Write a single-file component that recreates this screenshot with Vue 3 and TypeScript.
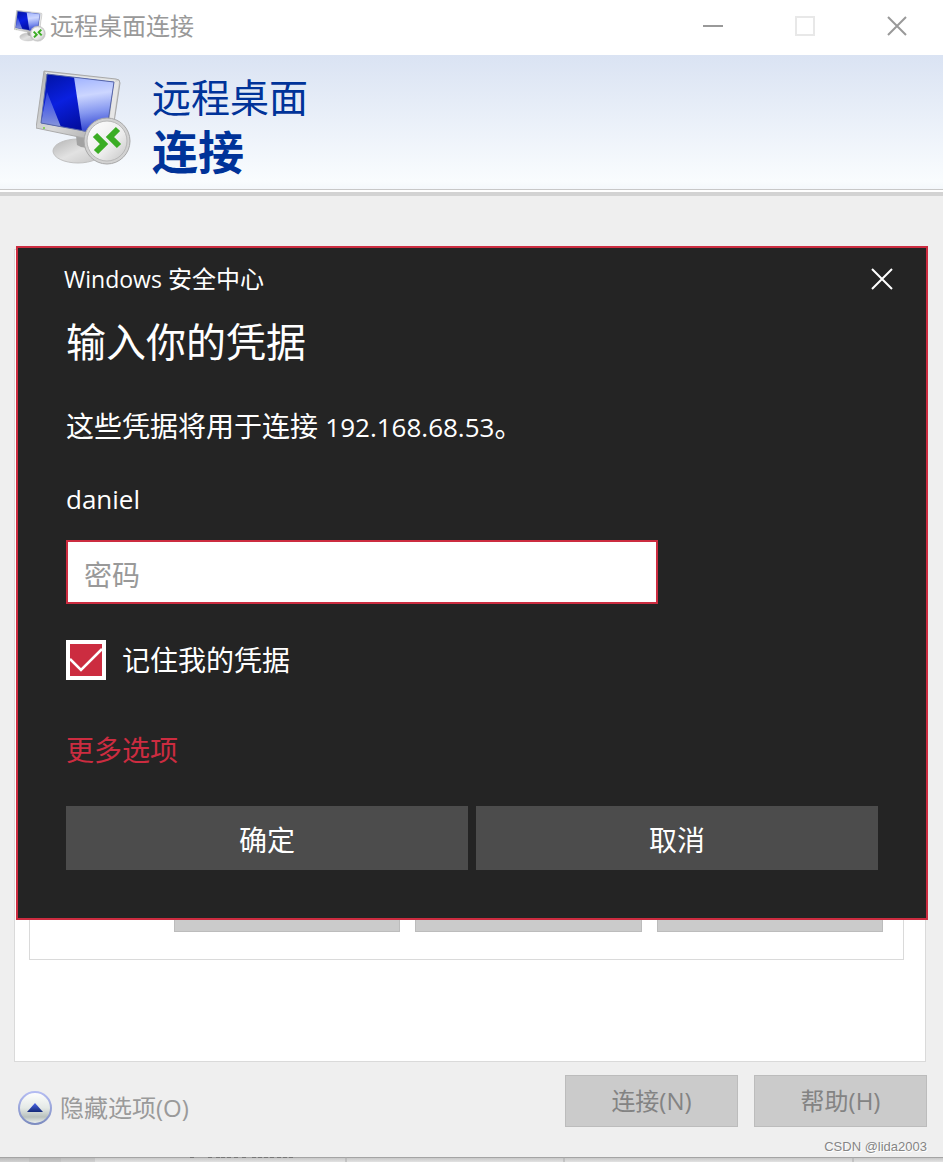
<script setup lang="ts">
import { ref } from 'vue'

const host = '192.168.68.53'
const user = 'daniel'
const password = ref('')
const remember = ref(true)
const sessionActions = ['save', 'save-as', 'open']
const fragments = [190, 208, 216, 221, 227, 234, 242, 252, 258, 264, 270, 277, 283, 289]
</script>

<template>
  <svg class="defs" aria-hidden="true">
    <defs>
      <linearGradient id="screenBlue" x1="0" y1="0" x2="0.6" y2="1">
        <stop offset="0" stop-color="#0012a0" />
        <stop offset="0.45" stop-color="#0a20e0" />
        <stop offset="1" stop-color="#00088c" />
      </linearGradient>
      <linearGradient id="screenShine" x1="0.4" y1="0" x2="0.5" y2="1">
        <stop offset="0" stop-color="#a4b6ff" />
        <stop offset="0.3" stop-color="#ccd6ff" />
        <stop offset="0.6" stop-color="#8698f0" />
        <stop offset="1" stop-color="#1c2fc8" />
      </linearGradient>
      <linearGradient id="screenGlint" x1="0" y1="0" x2="0" y2="1">
        <stop offset="0" stop-color="#5a70f0" stop-opacity="0.5" />
        <stop offset="1" stop-color="#8a98dc" />
      </linearGradient>
      <linearGradient id="bezel" x1="0" y1="0" x2="1" y2="1">
        <stop offset="0" stop-color="#b2b4b4" />
        <stop offset="0.5" stop-color="#d8d8d8" />
        <stop offset="1" stop-color="#9a9a9a" />
      </linearGradient>
      <linearGradient id="stand" x1="0" y1="0" x2="1" y2="1">
        <stop offset="0" stop-color="#b4b4b4" />
        <stop offset="0.5" stop-color="#e2e2e2" />
        <stop offset="1" stop-color="#c4c4c4" />
      </linearGradient>
      <linearGradient id="badge" x1="0" y1="0" x2="1" y2="1">
        <stop offset="0" stop-color="#ffffff" />
        <stop offset="0.6" stop-color="#ececec" />
        <stop offset="1" stop-color="#c4c4c4" />
      </linearGradient>
      <linearGradient id="orb" x1="0" y1="0" x2="0" y2="1">
        <stop offset="0" stop-color="#ffffff" />
        <stop offset="0.5" stop-color="#e4e9e6" />
        <stop offset="0.78" stop-color="#b9c1bd" />
        <stop offset="1" stop-color="#f4f8f6" />
      </linearGradient>
      <linearGradient id="orbRing" x1="0" y1="0" x2="0" y2="1">
        <stop offset="0" stop-color="#b4bcf2" />
        <stop offset="1" stop-color="#7d8cc0" />
      </linearGradient>
      <linearGradient id="orbArrow" x1="0" y1="0" x2="0" y2="1">
        <stop offset="0" stop-color="#4a66ea" />
        <stop offset="1" stop-color="#142a78" />
      </linearGradient>
      <symbol id="remoteDesktop" viewBox="0 0 96 96">
        <ellipse cx="42" cy="81" rx="25" ry="12" fill="url(#stand)" stroke="#c0c0c0" />
        <path d="M40 66 L60 68 L58 76 Q48 80 41 75Z" fill="#a2a2a2" />
        <path d="M8 1 L80 9 Q84 9 84 13 L75 72 L72 73 L0 58Z" fill="url(#bezel)" stroke="#aaa" />
        <path d="M9 2 L80 10 L78 12 L10 4Z" fill="#e4e6e6" />
        <path d="M78 12 L83 11 L75 70 L71 71Z" fill="#e6e6e6" />
        <path d="M11 4 L78 12 L70 65 L5 53Z" fill="url(#screenBlue)" />
        <path d="M38 7 L78 12 L70 65 L46 61Z" fill="url(#screenShine)" />
        <path d="M11 22 L25 57 L5 53Z" fill="url(#screenGlint)" />
        <path d="M11 4 L78 12 L70 65 L5 53Z" fill="none" stroke="#5968a8" />
        <circle cx="8" cy="58" r="1" fill="#72d03c" />
        <circle cx="71" cy="71" r="23" fill="#d2d2d2" stroke="#a8a8a8" />
        <circle cx="71" cy="71" r="20" fill="url(#badge)" stroke="#b8b8b8" />
        <path d="M59 65 L68 74 L60 82" fill="none" stroke="#3bad24" stroke-width="6" />
        <path d="M82 59 L74 67 L83 76" fill="none" stroke="#3bad24" stroke-width="6" />
      </symbol>
    </defs>
  </svg>

  <main class="window">
    <header class="titlebar">
      <svg class="app-icon" aria-hidden="true"><use href="#remoteDesktop" /></svg>
      <span class="title">远程桌面连接</span>
      <button class="caption" type="button" aria-label="最小化">
        <svg viewBox="0 0 22 22"><path d="M1 11H21" stroke="#999" stroke-width="2" /></svg>
      </button>
      <button class="caption" type="button" aria-label="最大化" disabled>
        <svg viewBox="0 0 22 22"><rect x="2" y="2" width="18" height="18" fill="none" stroke="#e8e8e8" stroke-width="2" /></svg>
      </button>
      <button class="caption" type="button" aria-label="关闭">
        <svg viewBox="0 0 22 22"><path d="M2 2L20 20M20 2L2 20" stroke="#999" stroke-width="2" /></svg>
      </button>
    </header>

    <section class="banner">
      <svg class="banner-icon" aria-hidden="true"><use href="#remoteDesktop" /></svg>
      <h1><span>远程桌面</span><strong>连接</strong></h1>
    </section>

    <section class="work">
      <div class="page">
        <div class="group">
          <button v-for="action in sessionActions" :key="action" class="flat" type="button" disabled :aria-label="action"></button>
        </div>
      </div>

      <form class="dialog" role="dialog" aria-labelledby="dialog-heading" @submit.prevent>
        <div class="dialog-bar">
          <span><span class="latin-small">Windows</span> 安全中心</span>
          <button class="dialog-close" type="button" aria-label="关闭">
            <svg viewBox="0 0 22 22"><path d="M1 1L21 21M21 1L1 21" stroke="#fff" stroke-width="2" /></svg>
          </button>
        </div>
        <h2 id="dialog-heading">输入你的凭据</h2>
        <p class="message">这些凭据将用于连接 <span class="latin">{{ host }}</span>。</p>
        <p class="user latin">{{ user }}</p>
        <input v-model="password" class="password" type="password" placeholder="密码" aria-label="密码" />
        <label class="remember">
          <span class="tick">
            <input v-model="remember" type="checkbox" />
            <svg v-if="remember" viewBox="0 0 40 40" aria-hidden="true">
              <path d="M4 19L15 30L36 9" fill="none" stroke="#fff" stroke-width="2.5" />
            </svg>
          </span>
          <span>记住我的凭据</span>
        </label>
        <a class="more" href="#">更多选项</a>
        <div class="choices">
          <button type="submit">确定</button>
          <button type="button">取消</button>
        </div>
      </form>
    </section>

    <footer>
      <div class="footer-row">
        <button class="toggle" type="button">
          <svg viewBox="0 0 34 34" aria-hidden="true">
            <circle cx="17" cy="17" r="16" fill="url(#orb)" stroke="url(#orbRing)" stroke-width="2" />
            <path d="M9 21L17 12L25 21Z" fill="url(#orbArrow)" />
          </svg>
          <span>隐藏选项(O)</span>
        </button>
        <button class="flat action" type="button">连接(N)</button>
        <button class="flat action" type="button">帮助(H)</button>
      </div>
      <small>CSDN @lida2003</small>
    </footer>

    <div class="behind" aria-hidden="true">
      <svg>
        <rect x="29" y="1" width="32" height="5" fill="#777" opacity="0.1" />
        <rect x="0" y="1" width="95" height="5" fill="#777" opacity="0.15" />
        <rect v-for="x in fragments" :key="x" :x="x" y="0" width="4" height="1" fill="#777" />
        <path d="M346 0V6M564 0V6M853 0V6" stroke="#aaa" />
      </svg>
    </div>
  </main>
</template>

<style>
body {
  margin: 0;
  background: #efefef;
}
</style>

<style scoped>
* {
  box-sizing: border-box;
}

button,
input {
  margin: 0;
  padding: 0;
  border: 0;
  border-radius: 0;
  background: none;
  color: inherit;
  font: inherit;
}

.defs {
  position: absolute;
  width: 0;
  height: 0;
}

.window {
  display: flex;
  flex-direction: column;
  min-height: 100vh;
  background: #efefef;
  font-family: "Open Sans", "Noto Sans CJK SC", sans-serif;
  font-size: 24px;
  line-height: 32px;
}

.titlebar {
  display: flex;
  align-items: center;
  height: 55px;
  padding: 0 0 3px 14px;
  background: #fff;
  color: #999;
}

.app-icon {
  width: 32px;
  height: 32px;
  margin-right: 4px;
}

.title {
  flex: 1;
}

.caption {
  display: grid;
  place-items: center;
  width: 92px;
  height: 52px;
}

.caption svg,
.dialog-close svg {
  width: 22px;
  height: 22px;
}

.banner {
  display: flex;
  align-items: flex-start;
  gap: 20px;
  height: 141px;
  padding: 15px 36px 0;
  border-bottom: 4px solid #d3d3d3;
  background: linear-gradient(#fff, #fff) 0 100% / 100% 2px no-repeat,
    linear-gradient(#c8c8c8, #c8c8c8) 0 134px / 100% 1px no-repeat,
    linear-gradient(#dae3f3, #f9fcfe 92%, #f2f6fa);
}

.banner-icon {
  width: 96px;
  height: 96px;
}

h1 {
  margin: 0;
  color: #003399;
  font-size: 39px;
  font-weight: 400;
  line-height: 54px;
}

h1 span,
h1 strong {
  display: block;
}

h1 strong {
  font-size: 46px;
}

.work {
  position: relative;
  display: flex;
  flex: 1;
  padding: 53px 17px 0 14px;
}

.page {
  flex: 1;
  display: flex;
  min-height: 813px;
  padding: 14px 21px 101px 14px;
  border: 1px solid #dadada;
  background: #fff;
}

.group {
  flex: 1;
  display: flex;
  align-items: flex-end;
  gap: 15px;
  padding: 0 20px 27px 144px;
  border: 1px solid #dadada;
}

.flat {
  border: 1px solid #bcbcbc;
  background: #cbcbcb;
  color: #838383;
}

.group .flat {
  flex: 1;
  height: 52px;
}

.dialog {
  position: absolute;
  top: 50px;
  right: 15px;
  left: 16px;
  display: flex;
  flex-direction: column;
  align-items: flex-start;
  padding: 0 48px 48px;
  border: 2px solid #cc2c40;
  background: #242424;
  color: #fff;
  font-size: 28px;
  line-height: 40px;
}

.dialog-bar {
  display: flex;
  align-self: stretch;
  align-items: center;
  justify-content: space-between;
  height: 62px;
  margin: 0 -16px 0 -2px;
  font-size: 24px;
}

.latin-small {
  font-size: 23px;
}

.latin {
  font-size: 26px;
}

.dialog-close {
  display: grid;
  place-items: center;
  width: 24px;
  height: 40px;
}

h2 {
  margin: 0;
  font-size: 40px;
  font-weight: 400;
  line-height: 64px;
}

.message {
  margin: 32px 0;
}

.user {
  margin: 0 0 21px;
}

.password {
  width: 100%;
  max-width: 592px;
  height: 64px;
  padding: 6px 16px 0;
  border: 2px solid #cc2c40;
  outline: 0;
  background: #fff;
  color: #222;
}

.password::placeholder {
  color: #999;
  opacity: 1;
}

.remember {
  display: flex;
  gap: 16px;
  margin-top: 36px;
}

.tick {
  display: grid;
  width: 40px;
  height: 40px;
}

.tick > * {
  grid-area: 1 / 1;
  width: 40px;
  height: 40px;
}

.tick svg {
  pointer-events: none;
}

.tick input {
  appearance: none;
  border: 4px solid #fff;
}

.tick input:checked {
  background: #cc2c40;
}

.more {
  margin-top: 50px;
  color: #cc2c40;
  text-decoration: none;
}

.choices {
  display: flex;
  align-self: stretch;
  gap: 8px;
  margin-top: 36px;
}

.choices button {
  flex: 1;
  height: 64px;
  padding-top: 4px;
  background: #4c4c4c;
}

footer {
  padding: 13px 16px 0 18px;
}

.footer-row {
  display: flex;
  gap: 16px;
}

.toggle {
  display: flex;
  align-items: center;
  align-self: flex-end;
  gap: 8px;
  height: 34px;
  margin: 0 auto 2px 0;
  color: #9a9a9a;
}

.toggle svg {
  width: 34px;
  height: 34px;
}

.action {
  width: 173px;
  height: 52px;
}

small {
  display: block;
  margin-top: 10px;
  color: #858585;
  font-family: "Liberation Sans", sans-serif;
  font-size: 13px;
  line-height: 20px;
  text-align: right;
  text-shadow: 1px 1px 0 #fff;
}

.behind {
  height: 5px;
  background: linear-gradient(#a4a4a4 1px, #c8c8c8 1px, #e2e2e2);
}

.behind svg {
  display: block;
  width: 100%;
  height: 5px;
}
</style>
